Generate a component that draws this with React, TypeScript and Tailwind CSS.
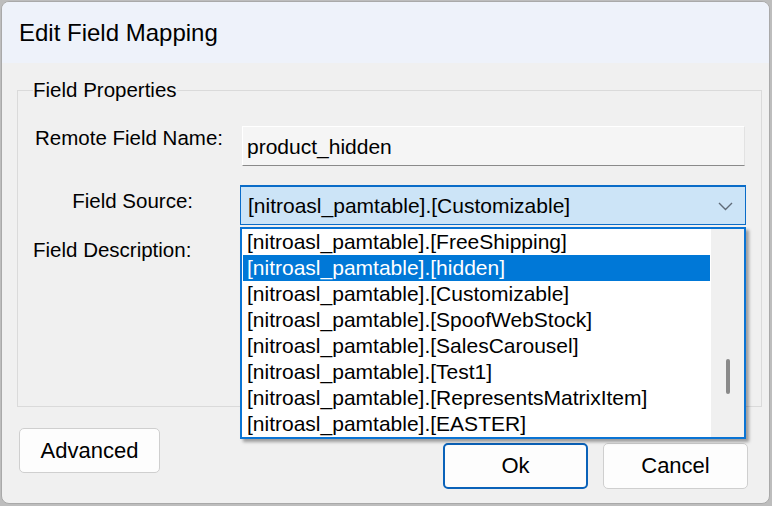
import React from 'react';

const sources = [
  'FreeShipping',
  'hidden',
  'Customizable',
  'SpoofWebStock',
  'SalesCarousel',
  'Test1',
  'RepresentsMatrixItem',
  'EASTER',
];

const selected = 'hidden';

function ComboList() {
  return (
    <div className="absolute left-[238px] top-[164px] w-[506px] h-[212px] border-2 border-[#0a74d4] bg-white shadow-[3px_3px_3px_rgba(0,0,0,0.35)] flex">
      <div className="flex-1 pl-[1px] pr-[1px]">
        {sources.map((name) => (
          <div
            key={name}
            className={
              name === selected
                ? 'h-[26px] leading-[26px] pl-[4px] bg-[#0078d7] text-white whitespace-nowrap'
                : 'h-[26px] leading-[26px] pl-[4px] text-black whitespace-nowrap'
            }
          >
            [nitroasl_pamtable].[{name}]
          </div>
        ))}
      </div>
      {/* vertical scrollbar */}
      <div className="w-[33px] bg-[#f0f0f0] relative">
        <div className="absolute left-[15px] top-[130px] w-[4px] h-[35px] rounded-[2px] bg-[#8a8a8a]" />
      </div>
    </div>
  );
}

export default function App() {
  return (
    <div
      className="w-[772px] h-[506px] bg-[#bdbdbd] pl-[1px] pt-[1px] overflow-hidden text-[21px] text-black"
      style={{ fontFamily: '"Liberation Sans", Arial, sans-serif' }}
    >
      <div className="w-[769px] h-[503px] rounded-[8px] border border-[#a9a9a9] bg-[#f0f0f0] overflow-hidden flex flex-col">
        {/* title bar */}
        <div className="h-[61px] shrink-0 bg-[#eef2fa] pl-[17px] flex items-center text-[24px] leading-none">
          Edit Field Mapping
        </div>

        <div className="relative flex-1">
          <fieldset className="ml-[15px] mt-[15px] w-[739px] h-[329px] border border-[#dadada] px-[15px]">
            <legend className="text-[20.5px] leading-[24px] px-0">Field Properties</legend>

            <div className="flex mt-[24px]">
              <div className="w-[209px] pl-[2px] text-[20.5px] leading-[24px]">Remote Field Name:</div>
              <div className="w-[503px] h-[40px] bg-[#f5f5f5] border border-[#ffffff] border-b-[#8a8a8a] border-r-[#e2e2e2] pl-[4px] flex items-center leading-none">
                product_hidden
              </div>
            </div>

            <div className="flex mt-[19px]">
              <div className="w-[207px] pr-[47px] text-right pt-[4px] text-[20.5px] leading-[24px]">Field Source:</div>
              <div className="w-[506px] h-[40px] bg-[#cce4f7] border border-[#0a6cc8] border-t-2 pl-[7px] pr-[12px] flex items-center justify-between leading-none">
                <span>[nitroasl_pamtable].[Customizable]</span>
                <svg width="15" height="9" viewBox="0 0 15 9" className="mt-[1px]">
                  <polyline points="1,1 7.5,7.5 14,1" fill="none" stroke="#5f6b78" strokeWidth="1.4" />
                </svg>
              </div>
            </div>

            <div className="mt-[13px] text-[20.5px] leading-[24px]">Field Description:</div>
          </fieldset>

          <div className="flex items-start pl-[17px] mt-[21px]">
            <button className="w-[141px] h-[45px] rounded-[5px] border border-[#cfcfcf] bg-[#fdfdfd] text-[22px] leading-none">
              Advanced
            </button>
            <button className="ml-[283px] mt-[15px] w-[145px] h-[46px] rounded-[5px] border-2 border-[#0a62b9] bg-[#fdfdfd] text-[22px] leading-none">
              Ok
            </button>
            <button className="ml-[15px] mt-[15px] w-[145px] h-[46px] rounded-[5px] border border-[#cfcfcf] bg-[#fdfdfd] text-[22px] leading-none">
              Cancel
            </button>
          </div>

          <ComboList />
        </div>
      </div>
    </div>
  );
}
